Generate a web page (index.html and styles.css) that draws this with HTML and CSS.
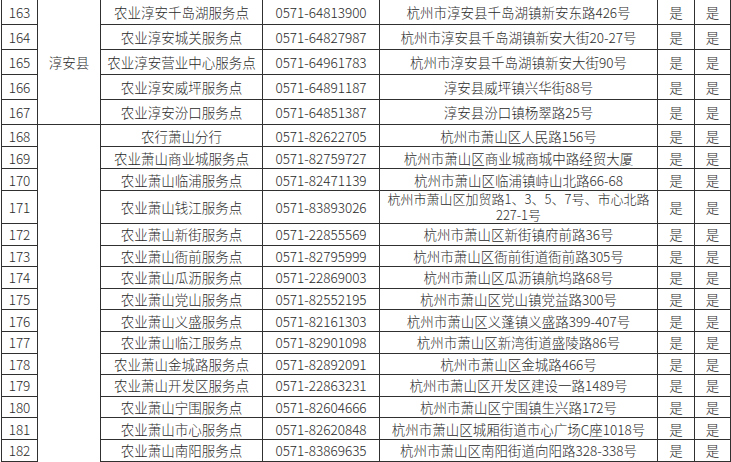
FILE: index.html
```html
<!DOCTYPE html>
<html lang="zh-CN">
<head>
<meta charset="utf-8">
<title>网点列表</title>
<link rel="stylesheet" href="styles.css">
</head>
<body>
<table class="grid">
  <colgroup>
    <col class="c-no"><col class="c-county"><col class="c-name"><col class="c-tel"><col class="c-addr"><col class="c-yes"><col class="c-yes2">
  </colgroup>
  <tbody>
    <tr class="r-tall first"><td>163</td><td rowspan="5">淳安县</td><td>农业淳安千岛湖服务点</td><td>0571-64813900</td><td>杭州市淳安县千岛湖镇新安东路426号</td><td>是</td><td>是</td></tr>
    <tr class="r-tall"><td>164</td><td>农业淳安城关服务点</td><td>0571-64827987</td><td>杭州市淳安县千岛湖镇新安大街20-27号</td><td>是</td><td>是</td></tr>
    <tr class="r-tall"><td>165</td><td>农业淳安营业中心服务点</td><td>0571-64961783</td><td>杭州市淳安县千岛湖镇新安大街90号</td><td>是</td><td>是</td></tr>
    <tr class="r-tall"><td>166</td><td>农业淳安威坪服务点</td><td>0571-64891187</td><td>淳安县威坪镇兴华街88号</td><td>是</td><td>是</td></tr>
    <tr class="r-tall"><td>167</td><td>农业淳安汾口服务点</td><td>0571-64851387</td><td>淳安县汾口镇杨翠路25号</td><td>是</td><td>是</td></tr>
    <tr class="r-mid"><td>168</td><td rowspan="15" class="open"></td><td>农行萧山分行</td><td>0571-82622705</td><td>杭州市萧山区人民路156号</td><td>是</td><td>是</td></tr>
    <tr class="r-mid"><td>169</td><td>农业萧山商业城服务点</td><td>0571-82759727</td><td>杭州市萧山区商业城商城中路经贸大厦</td><td>是</td><td>是</td></tr>
    <tr class="r-mid"><td>170</td><td>农业萧山临浦服务点</td><td>0571-82471139</td><td>杭州市萧山区临浦镇峙山北路66-68</td><td>是</td><td>是</td></tr>
    <tr class="r-double"><td>171</td><td>农业萧山钱江服务点</td><td>0571-83893026</td><td class="wrap">杭州市萧山区加贸路1、3、5、7号、市心北路<br>227-1号</td><td>是</td><td>是</td></tr>
    <tr class="r-low"><td>172</td><td>农业萧山新街服务点</td><td>0571-22855569</td><td>杭州市萧山区新街镇府前路36号</td><td>是</td><td>是</td></tr>
    <tr class="r-low"><td>173</td><td>农业萧山衙前服务点</td><td>0571-82795999</td><td>杭州市萧山区衙前街道衙前路305号</td><td>是</td><td>是</td></tr>
    <tr class="r-low"><td>174</td><td>农业萧山瓜沥服务点</td><td>0571-22869003</td><td>杭州市萧山区瓜沥镇航坞路68号</td><td>是</td><td>是</td></tr>
    <tr class="r-low"><td>175</td><td>农业萧山党山服务点</td><td>0571-82552195</td><td>杭州市萧山区党山镇党益路300号</td><td>是</td><td>是</td></tr>
    <tr class="r-low"><td>176</td><td>农业萧山义盛服务点</td><td>0571-82161303</td><td>杭州市萧山区义蓬镇义盛路399-407号</td><td>是</td><td>是</td></tr>
    <tr class="r-low"><td>177</td><td>农业萧山临江服务点</td><td>0571-82901098</td><td>杭州市萧山区新湾街道盛陵路86号</td><td>是</td><td>是</td></tr>
    <tr class="r-low"><td>178</td><td>农业萧山金城路服务点</td><td>0571-82892091</td><td>杭州市萧山区金城路466号</td><td>是</td><td>是</td></tr>
    <tr class="r-low"><td>179</td><td>农业萧山开发区服务点</td><td>0571-22863231</td><td>杭州市萧山区开发区建设一路1489号</td><td>是</td><td>是</td></tr>
    <tr class="r-low"><td>180</td><td>农业萧山宁围服务点</td><td>0571-82604666</td><td>杭州市萧山区宁围镇生兴路172号</td><td>是</td><td>是</td></tr>
    <tr class="r-low"><td>181</td><td>农业萧山市心服务点</td><td>0571-82620848</td><td>杭州市萧山区城厢街道市心广场C座1018号</td><td>是</td><td>是</td></tr>
    <tr class="r-low"><td>182</td><td>农业萧山南阳服务点</td><td>0571-83869635</td><td>杭州市萧山区南阳街道向阳路328-338号</td><td>是</td><td>是</td></tr>
  </tbody>
</table>
</body>
</html>
```

FILE: styles.css
```css
html, body {
  margin: 0;
  padding: 0;
  background: #ffffff;
  overflow: hidden;
}

body {
  width: 731px;
  height: 462px;
  padding-left: 1px;
  box-sizing: border-box;
}

.grid {
  border-collapse: collapse;
  table-layout: fixed;
  width: 729px;
  font-family: "Noto Sans CJK SC", "Liberation Sans", sans-serif;
  font-size: 13.5px;
  font-weight: 300;
  color: #2a2a2a;
  line-height: 16px;
}

.c-no { width: 36px; }
.c-county { width: 63px; }
.c-name { width: 162px; }
.c-tel { width: 117px; }
.c-addr { width: 278px; }
.c-yes { width: 37px; }
.c-yes2 { width: 36px; }

.grid td {
  border: 1px solid #303030;
  padding: 0;
  text-align: center;
  vertical-align: middle;
  white-space: nowrap;
  overflow: hidden;
}

.grid tr.first td {
  border-top: none;
}

.grid td.open {
  border-bottom: none;
}

.r-tall td { height: 24px; }
.r-mid td { height: 21px; }
.r-double td { height: 31px; }
.r-low td { height: 20.6px; }

.grid td.wrap {
  font-size: 13px;
  line-height: 16px;
}
```
